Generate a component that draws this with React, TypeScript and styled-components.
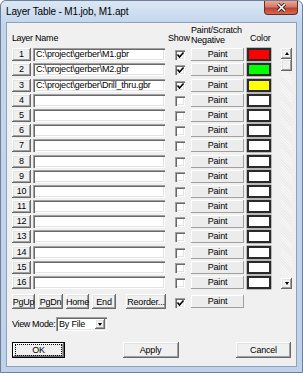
import { createGlobalStyle, styled } from 'styled-components';

const GlobalStyle = createGlobalStyle`
  html, body {
    margin: 0;
    padding: 0;
    background: #ffffff;
  }
  body {
    font-family: 'Liberation Sans', Arial, sans-serif;
    font-size: 9px;
    letter-spacing: -0.2px;
    color: #000;
  }
`;

type Layer = { id: number; file: string; show: boolean; color: string };

const layers: Layer[] = Array.from({ length: 16 }, (_, i) => ({
  id: i + 1,
  file: ['C:\\project\\gerber\\M1.gbr', 'C:\\project\\gerber\\M2.gbr', 'C:\\project\\gerber\\Drill_thru.gbr'][i] ?? '',
  show: i < 3,
  color: ['#ff0000', '#00ff00', '#ffff00'][i] ?? '#ffffff',
}));

const CheckMark = () => (
  <svg width='9' height='9' viewBox='0 0 9 9'>
    <polyline points='1.5,3.5 3.5,6 7.5,1.5' fill='none' stroke='#000' strokeWidth='1.6' />
  </svg>
);

const Check = ({ on }: { on: boolean }) => <CheckBox>{on && <CheckMark />}</CheckBox>;

const App = () => {
  return (
    <>
      <GlobalStyle />
      <Window>
        <TitleBar>
          <Title>Layer Table - M1.job, M1.apt</Title>
          <CloseButton>
            <svg width='11' height='9' viewBox='0 0 11 9'>
              <path d='M2 1 L9 8 M9 1 L2 8' stroke='#3b1a16' strokeWidth='3.2' />
              <path d='M2 1 L9 8 M9 1 L2 8' stroke='#ffffff' strokeWidth='1.6' />
            </svg>
          </CloseButton>
        </TitleBar>
        <Client>
          <Table>
            <HeadCell $tight>Layer</HeadCell>
            <HeadCell $shift={2}>Name</HeadCell>
            <HeadCell $shift={-5}>Show</HeadCell>
            <HeadStack>
              <span>Paint/Scratch</span>
              <span>Negative</span>
            </HeadStack>
            <HeadCell $shift={3}>Color</HeadCell>
            <span />
            {layers.map((l) => (
              <Row key={l.id}>
                <NumButton>{l.id}</NumButton>
                <NameField>{l.file}</NameField>
                <Check on={l.show} />
                <PaintButton>Paint</PaintButton>
                <Swatch $color={l.color} />
              </Row>
            ))}
            <ScrollBar>
              <ScrollArrow>
                <Tri $down={false} />
              </ScrollArrow>
              <Thumb />
              <Track />
              <ScrollArrow>
                <Tri $down />
              </ScrollArrow>
            </ScrollBar>
            <NavGroup>
              <NavButton $w={23}>PgUp</NavButton>
              <NavButton $w={25}>PgDn</NavButton>
              <NavButton $w={23}>Home</NavButton>
              <NavButton $w={24}>End</NavButton>
              <NavButton $w={40} $gap={7}>Reorder...</NavButton>
            </NavGroup>
            <FootCell>
              <Check on />
            </FootCell>
            <FootCell>
              <PaintButton>Paint</PaintButton>
            </FootCell>
          </Table>
          <ViewRow>
            <ViewLabel>View Mode:</ViewLabel>
            <Select>
              <SelectText>By File</SelectText>
              <SelectArrow>
                <Tri $down />
              </SelectArrow>
            </Select>
          </ViewRow>
          <ButtonRow>
            <DialogButton $w={53} $default>
              <Focus>OK</Focus>
            </DialogButton>
            <DialogButton $w={56}>Apply</DialogButton>
            <DialogButton $w={55}>Cancel</DialogButton>
          </ButtonRow>
        </Client>
      </Window>
    </>
  );
};

export default App;

const raised = `
  background: #f0f0f0;
  box-shadow: inset -1px -1px 0 #696969, inset 1px 1px 0 #ffffff, inset -2px -2px 0 #a0a0a0, inset 2px 2px 0 #e3e3e3;
`;

const sunken = `
  background: #ffffff;
  box-shadow: inset 1px 1px 0 #a0a0a0, inset 2px 2px 0 #696969, inset -1px -1px 0 #ffffff, inset -2px -2px 0 #e3e3e3;
`;

const Window = styled.div`
  width: 303px;
  height: 373px;
  box-sizing: border-box;
  display: flex;
  flex-direction: column;
  border: 1px solid #6f8096;
  border-radius: 6px 6px 0 0;
  background: linear-gradient(#dbe7f5, #c4d6ec 22px, #bfd2ea);
`;

const TitleBar = styled.div`
  height: 21px;
  display: flex;
  align-items: flex-start;
  padding-left: 5px;
`;

const Title = styled.span`
  font-size: 10px;
  line-height: 21px;
  letter-spacing: -0.15px;
`;

const CloseButton = styled.div`
  margin-left: auto;
  margin-right: 4px;
  width: 34px;
  height: 14px;
  box-sizing: border-box;
  display: flex;
  align-items: center;
  justify-content: center;
  border: 1px solid #6e2a22;
  border-top: none;
  border-radius: 0 0 4px 4px;
  background: linear-gradient(#e8a79a, #d4786a 45%, #c0402c 55%, #d06a55);
`;

const Client = styled.div`
  flex: 1;
  margin: 0 5px 5px;
  border: 1px solid #8ea2ba;
  background: #f0f0f0;
  padding: 4px 4px 0 5px;
  display: flex;
  flex-direction: column;
`;

const Table = styled.div`
  display: grid;
  grid-template-columns: 21px 140px 18px 56px 34px 11px;
  grid-template-rows: 19px repeat(16, 13px) 18px;
  row-gap: 2.2px;
`;

const HeadCell = styled.span<{ $shift?: number; $tight?: boolean }>`
  align-self: center;
  margin-left: ${(p) => p.$shift ?? 0}px;
  margin-top: 3px;
  white-space: nowrap;
  ${(p) => p.$tight && 'letter-spacing: -0.4px;'}
`;

const HeadStack = styled.div`
  display: flex;
  flex-direction: column;
  line-height: 9.5px;
  margin-top: -1px;
  white-space: nowrap;
`;

const Row = styled.div`
  display: contents;
`;

const NumButton = styled.div`
  ${raised}
  width: 19px;
  height: 13px;
  display: flex;
  align-items: center;
  justify-content: center;
  line-height: 13px;
`;

const NameField = styled.div`
  ${sunken}
  width: 132px;
  height: 13px;
  box-sizing: border-box;
  padding: 0 0 0 3px;
  line-height: 13px;
  white-space: nowrap;
  overflow: hidden;
`;

const CheckBox = styled.div`
  width: 10px;
  height: 10px;
  margin: 2px 0 0 2px;
  box-sizing: border-box;
  ${sunken}
  display: flex;
  align-items: center;
  justify-content: center;
  padding: 1px 0 0 1px;
`;

const PaintButton = styled.div`
  width: 53px;
  height: 13px;
  background: #ececec;
  box-shadow: inset -1px -1px 0 #a0a0a0, inset 1px 1px 0 #ffffff;
  display: flex;
  align-items: center;
  justify-content: center;
  line-height: 13px;
`;

const Swatch = styled.div<{ $color: string }>`
  width: 24px;
  height: 13px;
  box-sizing: border-box;
  background: ${(p) => p.$color};
  border: 2px solid #2a2a2a;
  box-shadow: 0 0 0 0.5px #808080;
`;

const ScrollBar = styled.div`
  grid-column: 6;
  grid-row: 2 / 18;
  display: flex;
  flex-direction: column;
  background: repeating-linear-gradient(45deg, #f6f6f6 0 1px, #ebebeb 1px 2px);
`;

const ScrollArrow = styled.div`
  ${raised}
  height: 11px;
  display: flex;
  align-items: center;
  justify-content: center;
`;

const Thumb = styled.div`
  ${raised}
  height: 12px;
`;

const Track = styled.div`
  flex: 1;
`;

const Tri = styled.span<{ $down: boolean }>`
  width: 0;
  height: 0;
  border-left: 2.5px solid transparent;
  border-right: 2.5px solid transparent;
  ${(p) => (p.$down ? 'border-top: 3px solid #000;' : 'border-bottom: 3px solid #000;')}
`;

const NavGroup = styled.div`
  grid-column: 1 / 3;
  display: flex;
  gap: 3px;
  align-self: end;
`;

const NavButton = styled.div<{ $w: number; $gap?: number }>`
  ${raised}
  width: ${(p) => p.$w}px;
  height: 15px;
  margin-left: ${(p) => p.$gap ?? 0}px;
  flex-shrink: 0;
  display: flex;
  align-items: center;
  justify-content: center;
  white-space: nowrap;
`;

const FootCell = styled.div`
  align-self: end;
  height: 15px;
  display: flex;
  align-items: center;
`;

const ViewRow = styled.div`
  display: flex;
  align-items: center;
  margin-top: 8px;
  height: 14px;
`;

const ViewLabel = styled.span`
  width: 44px;
  white-space: nowrap;
  letter-spacing: -0.35px;
`;

const Select = styled.div`
  ${sunken}
  width: 51px;
  height: 14px;
  box-sizing: border-box;
  display: flex;
  align-items: center;
  padding: 2px 2px 2px 3px;
`;

const SelectText = styled.span`
  flex: 1;
`;

const SelectArrow = styled.div`
  ${raised}
  width: 10px;
  height: 10px;
  display: flex;
  align-items: center;
  justify-content: center;
`;

const ButtonRow = styled.div`
  display: flex;
  justify-content: space-between;
  margin: 11px 1px 0 0;
`;

const DialogButton = styled.div<{ $w: number; $default?: boolean }>`
  ${raised}
  width: ${(p) => p.$w}px;
  height: 16px;
  box-sizing: border-box;
  display: flex;
  align-items: center;
  justify-content: center;
  ${(p) =>
    p.$default &&
    `box-shadow: inset 0 0 0 1px #000, inset -2px -2px 0 #696969, inset 2px 2px 0 #ffffff, inset -3px -3px 0 #a0a0a0;`}
`;

const Focus = styled.span`
  flex: 1;
  align-self: stretch;
  margin: 2px 3px;
  border: 1px dotted #000;
  display: flex;
  align-items: center;
  justify-content: center;
  line-height: 1;
`;
